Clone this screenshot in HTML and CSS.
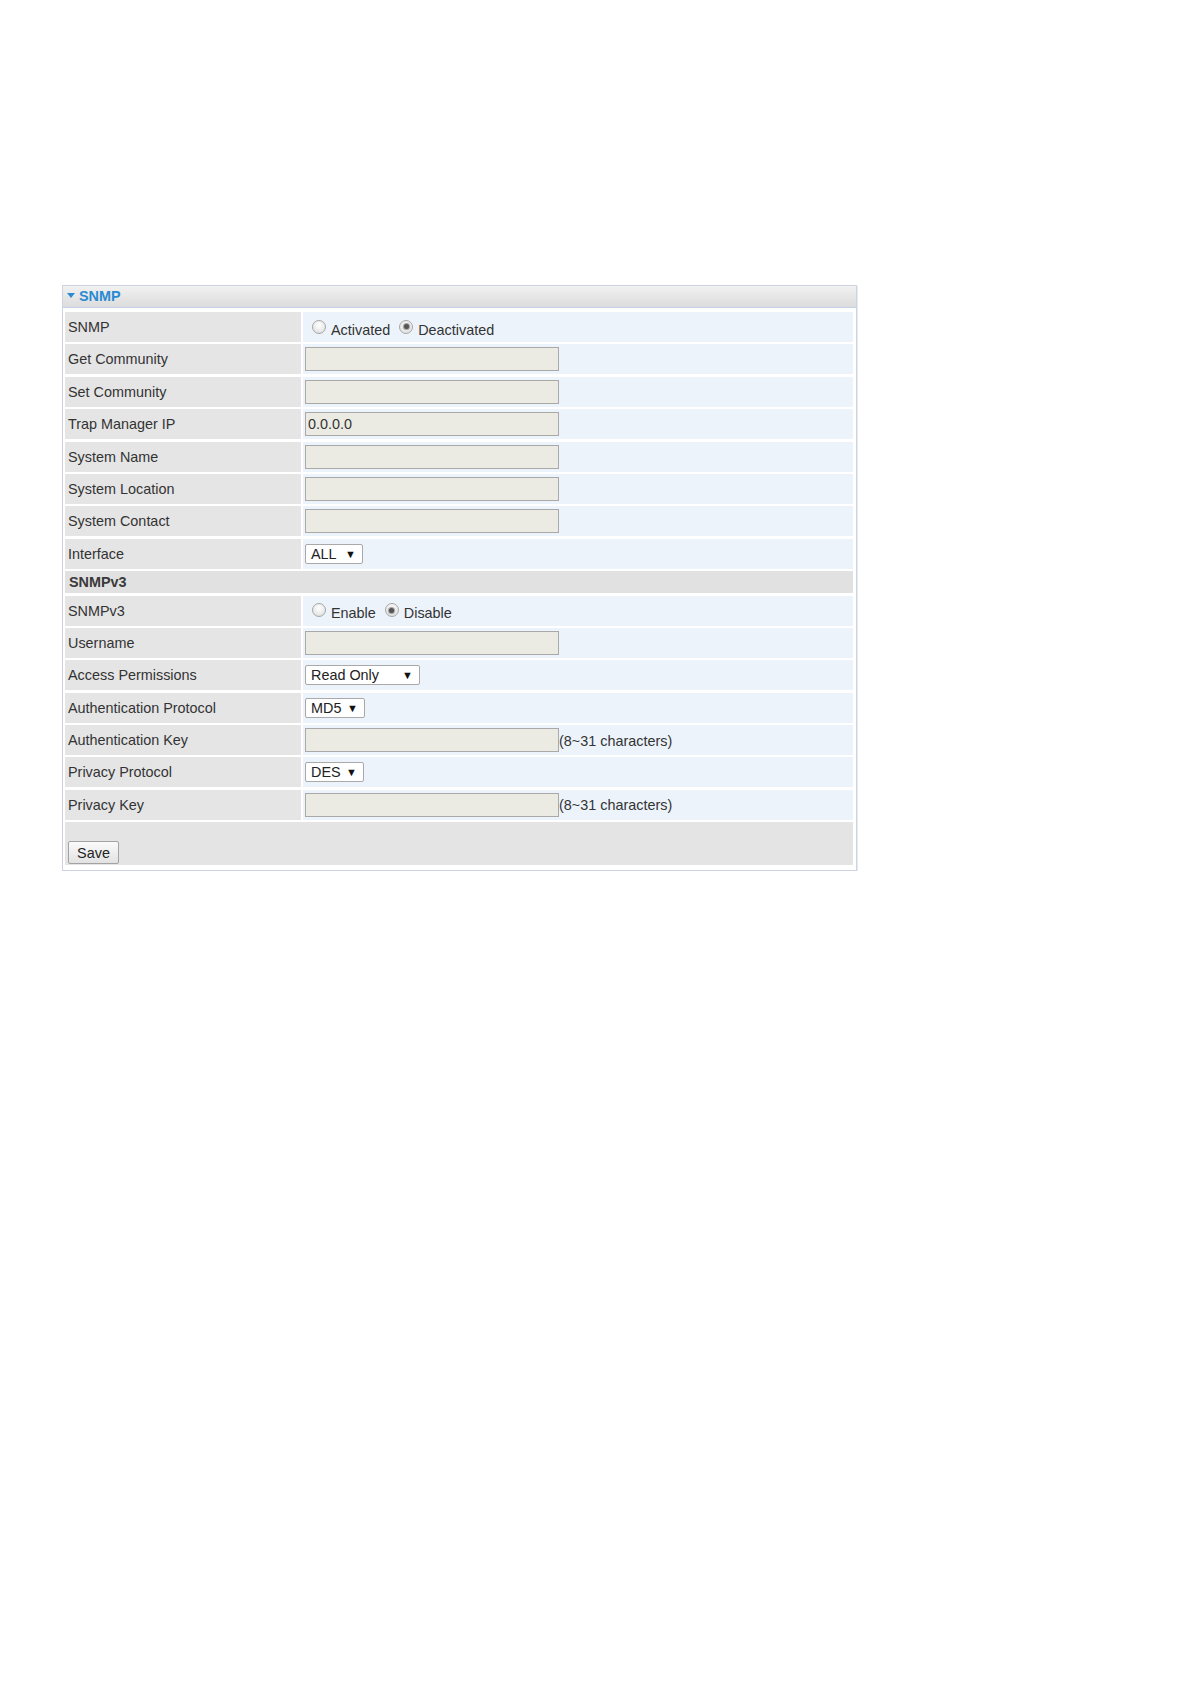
FILE: index.html
```html
<!DOCTYPE html>
<html>
<head>
<meta charset="utf-8">
<title>SNMP</title>
<link rel="stylesheet" href="styles.css">
</head>
<body>
<div class="panel">
  <div class="panel-head"><span class="tri"></span><span class="head-title">SNMP</span></div>
  <div class="panel-body">
    <div class="row">
      <div class="lbl">SNMP</div>
      <div class="val"><span class="radio"></span><span class="rtxt">Activated</span><span class="radio checked"></span><span class="rtxt">Deactivated</span></div>
    </div>
    <div class="row"><div class="lbl">Get Community</div><div class="val"><span class="inp"></span></div></div>
    <div class="row"><div class="lbl">Set Community</div><div class="val"><span class="inp"></span></div></div>
    <div class="row"><div class="lbl">Trap Manager IP</div><div class="val"><span class="inp">0.0.0.0</span></div></div>
    <div class="row"><div class="lbl">System Name</div><div class="val"><span class="inp"></span></div></div>
    <div class="row"><div class="lbl">System Location</div><div class="val"><span class="inp"></span></div></div>
    <div class="row"><div class="lbl">System Contact</div><div class="val"><span class="inp"></span></div></div>
    <div class="row"><div class="lbl">Interface</div><div class="val"><span class="sel sel-all">ALL<span class="arr">&#9660;</span></span></div></div>
    <div class="section">SNMPv3</div>
    <div class="row">
      <div class="lbl">SNMPv3</div>
      <div class="val"><span class="radio"></span><span class="rtxt">Enable</span><span class="radio checked"></span><span class="rtxt">Disable</span></div>
    </div>
    <div class="row"><div class="lbl">Username</div><div class="val"><span class="inp"></span></div></div>
    <div class="row"><div class="lbl">Access Permissions</div><div class="val"><span class="sel sel-ro">Read Only<span class="arr">&#9660;</span></span></div></div>
    <div class="row"><div class="lbl">Authentication Protocol</div><div class="val"><span class="sel sel-md5">MD5<span class="arr">&#9660;</span></span></div></div>
    <div class="row"><div class="lbl">Authentication Key</div><div class="val"><span class="inp"></span><span class="hint">(8~31 characters)</span></div></div>
    <div class="row"><div class="lbl">Privacy Protocol</div><div class="val"><span class="sel sel-des">DES<span class="arr">&#9660;</span></span></div></div>
    <div class="row"><div class="lbl">Privacy Key</div><div class="val"><span class="inp"></span><span class="hint">(8~31 characters)</span></div></div>
    <div class="save-row"><button class="btn" type="button">Save</button></div>
  </div>
</div>
</body>
</html>
```
FILE: styles.css
```css
html, body {
  margin: 0;
  padding: 0;
  background: #ffffff;
}
body {
  font-family: "Liberation Sans", Arial, sans-serif;
  font-size: 14.4px;
  color: #333333;
}
.panel {
  margin: 285px 0 0 62px;
  width: 793px;
  border: 1px solid #cdd3e0;
  box-shadow: 1px 1px 0 #e6e9f0;
  background: #ffffff;
}
.panel-head {
  height: 21px;
  display: flex;
  align-items: center;
  background: linear-gradient(#f1f1f1, #dcdcdc);
  border-bottom: 1px solid #c3d2e8;
  padding-left: 4px;
}
.tri {
  width: 0;
  height: 0;
  border-left: 4px solid transparent;
  border-right: 4px solid transparent;
  border-top: 5px solid #2a8bd2;
  margin-right: 4px;
  margin-top: -3px;
}
.head-title {
  color: #2a8bd2;
  font-weight: bold;
  font-size: 14.4px;
  margin-top: -2px;
}
.panel-body {
  padding: 4px 3px 5px 2px;
  display: flex;
  flex-direction: column;
  gap: 2.4px;
}
.row {
  display: grid;
  grid-template-columns: 236px 1fr;
  column-gap: 2px;
  height: 30px;
}
.lbl {
  background: #e5e5e5;
  display: flex;
  align-items: center;
  padding-left: 3px;
  color: #333333;
}
.val {
  background: #edf3fb;
  display: flex;
  align-items: center;
  padding-left: 2px;
}
.inp {
  width: 250px;
  height: 22px;
  border: 1px solid #a9a9a9;
  background: #ebebe3;
  display: flex;
  align-items: center;
  padding-left: 2px;
  box-sizing: content-box;
  color: #333333;
}
.hint {
  margin-left: 0;
  padding-top: 1px;
}
.radio {
  width: 12px;
  height: 12px;
  border-radius: 50%;
  border: 1px solid #a6a6a6;
  background: radial-gradient(circle at 50% 35%, #ffffff 0%, #e6e6e6 70%, #d0d0d0 100%);
  margin-left: 7px;
  margin-right: 5px;
  margin-top: -1px;
  display: inline-flex;
  align-items: center;
  justify-content: center;
  box-sizing: content-box;
}
.radio.checked::after {
  content: "";
  width: 5px;
  height: 5px;
  border-radius: 50%;
  background: #555555;
  box-shadow: 0 0 1px 1px #9a9a9a;
}
.rtxt {
  padding-top: 5px;
  margin-right: 5px;
}
.rtxt + .radio {
  margin-left: 4px;
}
.sel {
  position: relative;
  height: 18px;
  border: 1px solid #a9a9a9;
  border-radius: 2px;
  background: #ffffff;
  display: flex;
  align-items: center;
  padding-left: 5px;
  box-sizing: content-box;
  color: #222222;
}
.sel .arr {
  position: absolute;
  right: 6px;
  top: 50%;
  transform: translateY(-50%);
  font-size: 11px;
  color: #111111;
}
.sel-all { width: 51px; }
.sel-ro { width: 108px; }
.sel-md5 { width: 53px; }
.sel-des { width: 52px; }
.section {
  height: 22px;
  background: #e1e1e1;
  display: flex;
  align-items: center;
  padding-left: 4px;
  font-weight: bold;
  color: #3a3a3a;
}
.save-row {
  height: 43px;
  background: #e4e4e4;
  display: flex;
  align-items: flex-end;
  padding: 0 0 1px 3px;
  box-sizing: border-box;
}
.btn {
  width: 51px;
  height: 23px;
  border: 1px solid #a3a3a3;
  border-radius: 2px;
  background: linear-gradient(#fbfbfb, #e2e2e2);
  font-family: "Liberation Sans", Arial, sans-serif;
  font-size: 14.4px;
  color: #222222;
  padding: 0;
}
```
